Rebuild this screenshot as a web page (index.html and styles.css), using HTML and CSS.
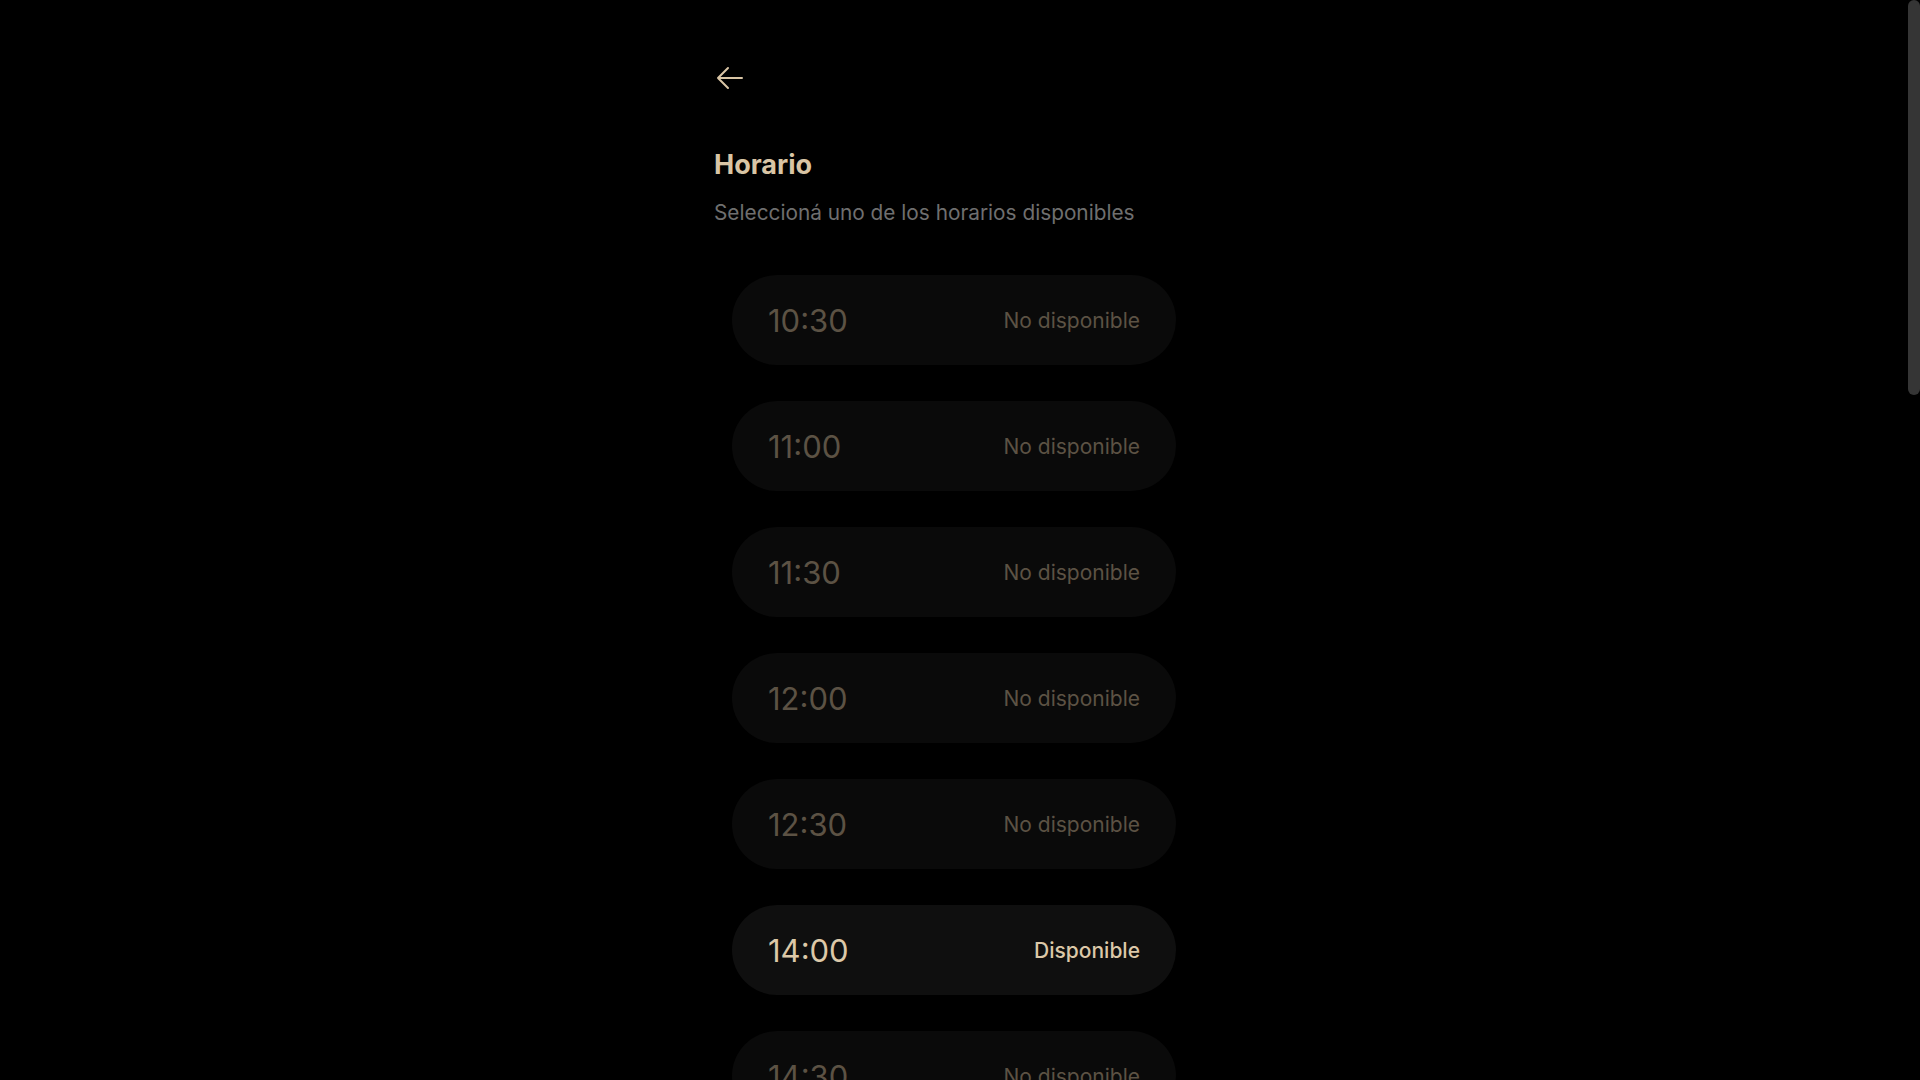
FILE: index.html
```html
<!DOCTYPE html>
<html lang="es">
<head>
<meta charset="utf-8">
<title>Horario</title>
<link rel="stylesheet" href="styles.css">
</head>
<body>
<div class="app">
<main class="page">
  <button class="back" aria-label="Volver">
    <svg viewBox="0 0 24 24" width="32" height="32" fill="none" stroke="currentColor" stroke-width="1.5" stroke-linecap="round" stroke-linejoin="round"><path d="M10.5 19.5 3 12m0 0 7.5-7.5M3 12h18"/></svg>
  </button>
  <h1 class="title">Horario</h1>
  <p class="subtitle">Seleccioná uno de los horarios disponibles</p>
  <ul class="slots">
    <li class="slot off"><span class="time">10:30</span><span class="state">No disponible</span></li>
    <li class="slot off"><span class="time">11:00</span><span class="state">No disponible</span></li>
    <li class="slot off"><span class="time">11:30</span><span class="state">No disponible</span></li>
    <li class="slot off"><span class="time">12:00</span><span class="state">No disponible</span></li>
    <li class="slot off"><span class="time">12:30</span><span class="state">No disponible</span></li>
    <li class="slot on"><span class="time">14:00</span><span class="state">Disponible</span></li>
    <li class="slot off"><span class="time">14:30</span><span class="state">No disponible</span></li>
    <li class="slot off"><span class="time">15:00</span><span class="state">No disponible</span></li>
    <li class="slot on"><span class="time">15:30</span><span class="state">Disponible</span></li>
    <li class="slot on"><span class="time">16:00</span><span class="state">Disponible</span></li>
    <li class="slot off"><span class="time">16:30</span><span class="state">No disponible</span></li>
    <li class="slot on"><span class="time">17:00</span><span class="state">Disponible</span></li>
    <li class="slot on"><span class="time">17:30</span><span class="state">Disponible</span></li>
    <li class="slot off"><span class="time">18:00</span><span class="state">No disponible</span></li>
    <li class="slot on"><span class="time">18:30</span><span class="state">Disponible</span></li>
    <li class="slot on"><span class="time">19:00</span><span class="state">Disponible</span></li>
    <li class="slot off"><span class="time">19:30</span><span class="state">No disponible</span></li>
    <li class="slot on"><span class="time">20:00</span><span class="state">Disponible</span></li>
    <li class="slot on"><span class="time">20:30</span><span class="state">Disponible</span></li>
    <li class="slot off"><span class="time">21:00</span><span class="state">No disponible</span></li>
  </ul>
</main>
<aside class="scrollbar" aria-hidden="true"><div class="thumb"></div></aside>
</div>
</body>
</html>
```
FILE: styles.css
```css
html {
  background: #000;
}
body {
  margin: 0;
  background: #000;
  font-family: Inter, "Noto Sans", sans-serif;
  color: #d9c5a5;
}
.app {
  display: flex;
  align-items: flex-start;
}
.page {
  flex: 1;
  max-width: 480px;
  margin: 0 auto;
  padding: 62px 0 60px;
  box-sizing: border-box;
}
.scrollbar {
  position: sticky;
  top: 0;
  width: 12px;
  height: 1080px;
  flex: none;
  background: #000;
}
.thumb {
  width: 12px;
  height: 395px;
  border-radius: 6px;
  background: #353535;
}
.back {
  display: block;
  background: none;
  border: 0;
  padding: 0;
  margin: 0;
  width: 32px;
  height: 32px;
  color: #d9c5a5;
  cursor: pointer;
}
.back svg {
  display: block;
}
.title {
  margin: 51px 0 0;
  font-size: 27px;
  line-height: 40px;
  font-weight: 700;
  color: #d9c5a5;
}
.subtitle {
  margin: 14px 0 0;
  font-size: 20.8px;
  line-height: 28px;
  color: #6f6f6f;
}
.slots {
  list-style: none;
  margin: 48px 0 0;
  padding: 0 18px;
  display: flex;
  flex-direction: column;
  gap: 36px;
}
.slot {
  height: 90px;
  border-radius: 45px;
  background: #0a0a0a;
  display: flex;
  align-items: center;
  justify-content: space-between;
  padding: 0 36px 0 36px;
  box-sizing: border-box;
}
.time {
  font-size: 31px;
  font-weight: 400;
}
.state {
  font-size: 21px;
  font-weight: 400;
}
.off {
  color: #5c5244;
}
.on {
  background: #0f0f0f;
  color: #dcc8a8;
}
.on .state {
  font-weight: 500;
}
```
